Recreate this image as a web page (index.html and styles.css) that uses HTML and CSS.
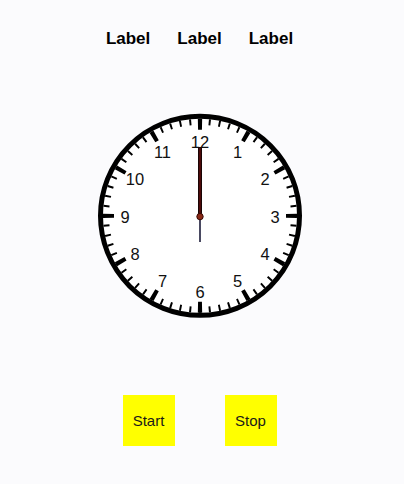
FILE: index.html
```html
<!DOCTYPE html>
<html>
<head>
<meta charset="utf-8">
<link rel="stylesheet" href="styles.css">
</head>
<body>
<div class="app">
  <div class="labels">
    <span class="label">Label</span>
    <span class="label">Label</span>
    <span class="label">Label</span>
  </div>
  <svg class="clock" width="210" height="210" viewBox="0 0 210 210">
    <circle cx="105" cy="104.8" r="99.5" fill="#ffffff" stroke="#000" stroke-width="5"/>
    <circle cx="105" cy="104.8" r="94" fill="none" stroke="#000" stroke-width="6" pathLength="60" stroke-dasharray="0.2 0.8" stroke-dashoffset="0.1"/>
    <circle cx="105" cy="104.8" r="91.5" fill="none" stroke="#000" stroke-width="11" pathLength="12" stroke-dasharray="0.088 0.912" stroke-dashoffset="0.044"/>
    <g class="nums">
      <text x="105" y="36.5">12</text>
      <text x="142.5" y="46.5">1</text>
      <text x="170" y="74">2</text>
      <text x="180" y="111.5">3</text>
      <text x="170" y="149">4</text>
      <text x="142.5" y="176.4">5</text>
      <text x="105" y="186.5">6</text>
      <text x="67.5" y="176.4">7</text>
      <text x="40" y="149">8</text>
      <text x="30" y="111.5">9</text>
      <text x="40" y="74">10</text>
      <text x="67.5" y="46.5">11</text>
    </g>
    <line x1="105" y1="105.6" x2="105" y2="131" stroke="#1c1c3a" stroke-width="1.6"/>
    <line x1="105" y1="105.6" x2="105" y2="36" stroke="#1a0505" stroke-width="4"/>
    <line x1="105" y1="104" x2="105" y2="37" stroke="#5a0c0c" stroke-width="1.6"/>
    <circle cx="105" cy="105.6" r="3.2" fill="#8a2a16" stroke="#3a0a05" stroke-width="1"/>
  </svg>
  <div class="buttons">
    <button class="btn">Start</button>
    <button class="btn">Stop</button>
  </div>
</div>
</body>
</html>
```
FILE: styles.css
```css
html, body {
  margin: 0;
  padding: 0;
  background: #fbfbfd;
}
body {
  width: 404px;
  height: 484px;
  overflow: hidden;
  font-family: "Liberation Sans", Arial, sans-serif;
}
.app {
  display: flex;
  flex-direction: column;
  align-items: center;
}
.labels {
  display: flex;
  gap: 27px;
  margin-top: 29px;
  margin-right: 5px;
  height: 20px;
  line-height: 20px;
}
.label {
  font-size: 17px;
  font-weight: bold;
  color: #000;
}
.clock {
  display: block;
  margin-top: 62px;
  margin-right: 4px;
}
.nums text {
  font-family: "Liberation Sans", Arial, sans-serif;
  font-size: 16.5px;
  fill: #111;
  text-anchor: middle;
}
.buttons {
  display: flex;
  gap: 50px;
  margin-top: 74px;
  margin-right: 5px;
}
.btn {
  width: 52px;
  height: 51px;
  border: none;
  padding: 0;
  margin: 0;
  background: #ffff00;
  font-family: "Liberation Sans", Arial, sans-serif;
  font-size: 15px;
  color: #1a1a1a;
}
```
